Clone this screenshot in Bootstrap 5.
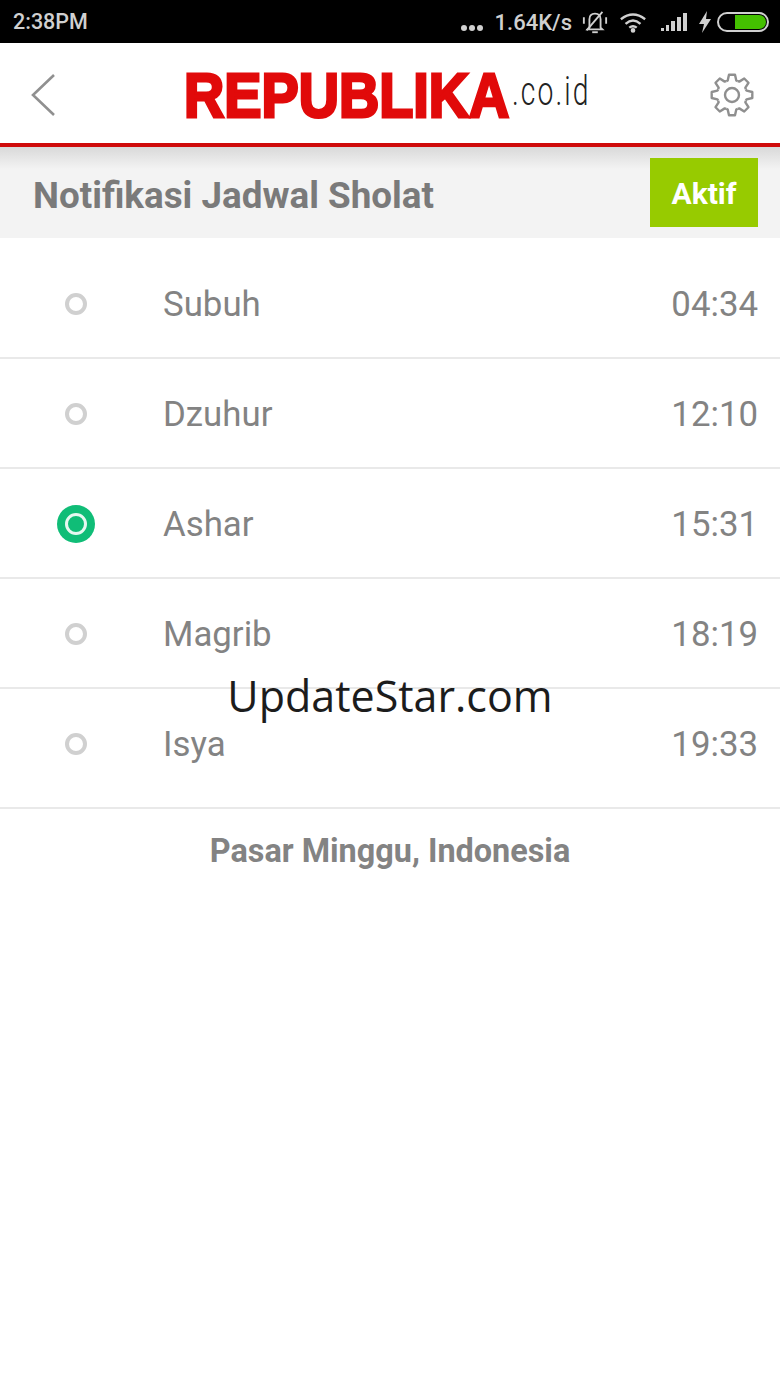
<!DOCTYPE html>
<html lang="id">
<head>
    <meta charset="UTF-8">
    <title>Notifikasi Jadwal Sholat</title>
    <link href="https://cdn.jsdelivr.net/npm/bootstrap@5.3.0/dist/css/bootstrap.min.css" rel="stylesheet">
    <style>
        body { width: 780px; height: 1386px; overflow: hidden; background: #fff; font-family: Roboto, "Liberation Sans", sans-serif; position: relative; }
        .status-bar { height: 43px; background: #000; color: #d0d0d0; font-size: 21.5px; font-weight: 500; padding: 1px 13px 0; }
        .status-icons { margin-right: -2px; }
        .dots-icon { margin: 12px 11px 0 0; }
        .speed-text { margin-right: 10px; font-size: 22px; }
        .bell-icon { margin-right: 11px; }
        .wifi-icon { margin-right: 13px; }
        .signal-icon { margin-right: 10px; }
        .bolt-icon { margin-right: 5px; }
        .app-head { height: 100px; padding: 0 25px 0 30px; }
        .logo-wrap { position: relative; width: 402px; height: 60px; margin-left: 4px; }
        .logo-main { position: absolute; left: 0; top: 2px; font-family: "Liberation Sans", sans-serif; font-weight: 700; font-size: 63px; line-height: 60px; color: #e10a0a; -webkit-text-stroke: 3px #e10a0a; white-space: nowrap; transform: scaleX(.885); transform-origin: left center; }
        .logo-sub { position: absolute; left: 328px; top: 4px; font-family: Roboto, sans-serif; font-weight: 300; font-size: 41px; line-height: 48px; color: #222; white-space: nowrap; transform: scaleX(.69); transform-origin: left center; letter-spacing: 3px; }
        .red-rule { height: 4px; background: #cf0a0a; }
        .title-band { height: 91px; background: linear-gradient(#d9d9d9 0, #f3f3f3 22px); padding: 11px 22px 0 33px; }
        .title-band h1 { font-size: 36.8px; font-weight: 700; color: #7a7a7a; margin: 3px 0 0; line-height: 69px; }
        .aktif-btn { width: 108px; height: 69px; background: #97cb00; color: #fff; font-size: 30px; font-weight: 700; border: 0; border-radius: 0; padding: 2px 0 0; }
        .prayer-list { padding-top: 11px; }
        .prayer-row { height: 110px; border-bottom: 2px solid #e9e9e9; padding: 2px 22px 0 0; font-size: 34.8px; color: #838383; }
        .prayer-row.last-row { height: 120px; padding-bottom: 10px; }
        .prayer-label { padding-top: 1px; }
        .radio-slot { width: 151px; margin-right: 12px; }
        .radio-off { width: 22px; height: 22px; border: 4px solid #d0d0d0; border-radius: 50%; }
        .radio-on { width: 38px; height: 38px; border-radius: 50%; background: #10bd77; }
        .radio-on::after { content: ""; width: 22px; height: 22px; border: 3px solid #e6f8f0; border-radius: 50%; }
        .place-name { font-size: 32.4px; font-weight: 700; color: #838383; line-height: 36px; margin-top: 24px; }
        .watermark { position: absolute; left: 0; right: 0; top: 666px; text-align: center; font-family: "Open Sans", sans-serif; font-size: 43px; line-height: 60px; color: #1c1c1c; }
    </style>
</head>
<body>

    <div class="status-bar d-flex justify-content-between align-items-center">
        <span>2:38PM</span>
        <div class="status-icons d-flex align-items-center">
            <svg class="dots-icon" width="24" height="8" viewBox="0 0 24 8"><g fill="#d0d0d0"><circle cx="4" cy="4" r="3"/><circle cx="12" cy="4" r="3"/><circle cx="20" cy="4" r="3"/></g></svg>
            <span class="speed-text">1.64K/s</span>
            <svg class="bell-icon" width="26" height="28" viewBox="0 0 28 28" fill="none" stroke="#d0d0d0" stroke-width="2"><path d="M8 20V11q0-6 6-6t6 6v9l2 2H6z"/><path d="M11 25h6"/><path d="M22 3L5 23"/><path d="M2 9v7M26 9v7"/></svg>
            <svg class="wifi-icon" width="28" height="24" viewBox="0 0 30 24" fill="none" stroke="#d0d0d0" stroke-width="2.6"><path d="M2 9q13-10 26 0"/><path d="M7 14q8-7 16 0"/><path d="M11 18q4-3 8 0"/><circle cx="15" cy="21" r="1.2" fill="#d0d0d0"/></svg>
            <svg class="signal-icon" width="28" height="22" viewBox="0 0 28 22" fill="#d0d0d0"><rect x="1" y="17" width="3" height="3"/><rect x="6" y="14" width="3" height="6"/><rect x="11" y="10" width="4" height="10"/><rect x="17" y="6" width="4" height="14"/><rect x="23" y="2" width="4" height="18"/></svg>
            <svg class="bolt-icon" width="14" height="24" viewBox="0 0 14 24" fill="#d0d0d0"><path d="M9 1L1 14h5l-2 9 9-14H8z"/></svg>
            <svg width="52" height="22" viewBox="0 0 52 22"><rect x="1" y="2" width="50" height="18" rx="9" fill="none" stroke="#d0d0d0" stroke-width="2"/><path d="M18 4h24a7 7 0 0 1 0 14H18z" fill="#44c000"/></svg>
        </div>
    </div>

    <header class="app-head d-flex justify-content-between align-items-center bg-white">
        <svg class="mt-1" width="26" height="44" viewBox="0 0 26 44" fill="none" stroke="#909090" stroke-width="2.6"><path d="M24 2L3 22l21 20"/></svg>
        <div class="logo-wrap">
            <span class="logo-main">REPUBLIKA</span>
            <span class="logo-sub">.co.id</span>
        </div>
        <svg class="mt-1" width="46" height="46" viewBox="-23 -23 46 46" fill="none" stroke="#8f8f8f" stroke-width="2.4" stroke-linejoin="round">
            <defs><path id="gearTooth" d="M-5.7-13.8L-4.300-14.600-3-20.300H3L4.300-14.600 5.700-13.800"/></defs>
            <use href="#gearTooth"/>
            <use href="#gearTooth" transform="rotate(45)"/>
            <use href="#gearTooth" transform="rotate(90)"/>
            <use href="#gearTooth" transform="rotate(135)"/>
            <use href="#gearTooth" transform="rotate(180)"/>
            <use href="#gearTooth" transform="rotate(225)"/>
            <use href="#gearTooth" transform="rotate(270)"/>
            <use href="#gearTooth" transform="rotate(315)"/>
            <circle r="7"/>
        </svg>
    </header>
    <div class="red-rule"></div>

    <div class="title-band d-flex justify-content-between align-items-start">
        <h1>Notifikasi Jadwal Sholat</h1>
        <button type="button" class="btn aktif-btn">Aktif</button>
    </div>

    <div class="prayer-list">
        <div class="prayer-row d-flex align-items-center">
            <div class="radio-slot d-flex justify-content-center"><span class="radio-off"></span></div>
            <span class="prayer-label flex-grow-1">Subuh</span><span class="prayer-label">04:34</span>
        </div>
        <div class="prayer-row d-flex align-items-center">
            <div class="radio-slot d-flex justify-content-center"><span class="radio-off"></span></div>
            <span class="prayer-label flex-grow-1">Dzuhur</span><span class="prayer-label">12:10</span>
        </div>
        <div class="prayer-row d-flex align-items-center">
            <div class="radio-slot d-flex justify-content-center"><span class="radio-on d-flex align-items-center justify-content-center"></span></div>
            <span class="prayer-label flex-grow-1">Ashar</span><span class="prayer-label">15:31</span>
        </div>
        <div class="prayer-row d-flex align-items-center">
            <div class="radio-slot d-flex justify-content-center"><span class="radio-off"></span></div>
            <span class="prayer-label flex-grow-1">Magrib</span><span class="prayer-label">18:19</span>
        </div>
        <div class="prayer-row last-row d-flex align-items-center">
            <div class="radio-slot d-flex justify-content-center"><span class="radio-off"></span></div>
            <span class="prayer-label flex-grow-1">Isya</span><span class="prayer-label">19:33</span>
        </div>
    </div>

    <div class="place-name text-center">Pasar Minggu, Indonesia</div>

    <div class="watermark">UpdateStar.com</div>

<script src="https://cdn.jsdelivr.net/npm/bootstrap@5.3.0/dist/js/bootstrap.bundle.min.js"></script>
</body>
</html>
